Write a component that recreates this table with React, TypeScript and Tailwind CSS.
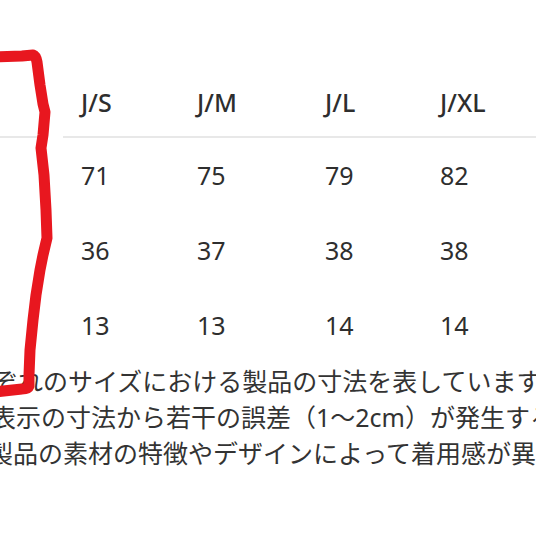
const sizes = ["J/S", "J/M", "J/L", "J/XL"];
const rows = [
  ["71", "75", "79", "82"],
  ["36", "37", "38", "38"],
  ["13", "13", "14", "14"],
];
const colWidths = ["w-[116px]", "w-[128px]", "w-[115px]", "flex-1"];

const Row = ({ cells, className }: { cells: string[]; className: string }) => (
  <div className={`flex items-center pl-[81px] ${className}`}>
    {cells.map((c, i) => (
      <div key={i} className={colWidths[i]}>
        {c}
      </div>
    ))}
  </div>
);

export default function App() {
  return (
    <div className="relative w-[536px] h-[536px] overflow-hidden bg-white font-['Noto_Sans','Noto_Sans_CJK_JP',sans-serif] text-[25px] text-[#2e2e2e]">
      <div className="pt-[70px]">
        <Row cells={sizes} className="h-[66px] font-medium" />
        <div className="flex h-[2px]">
          <div className="w-[44px] bg-[#e8e8e8]" />
          <div className="w-[19px]" />
          <div className="flex-1 bg-[#e8e8e8]" />
        </div>
        {rows.map((r, i) => (
          <Row key={i} cells={r} className="h-[75px]" />
        ))}
        <div className="whitespace-nowrap leading-[36px] text-[#333]">
          <p className="ml-[-57px]">それぞれのサイズにおける製品の寸法を表しています。</p>
          <p className="ml-[-9px]">表示の寸法から若干の誤差（1〜2cm）が発生する場合があります。</p>
          <p className="ml-[-12px]">製品の素材の特徴やデザインによって着用感が異なる場合があります。</p>
        </div>
      </div>

      {/* hand-drawn red marker */}
      <svg className="pointer-events-none absolute inset-0" width="536" height="536" viewBox="0 0 536 536">
        <path
          d="M -6 57 L 22 56 L 33 55 Q 36 56 37 62 L 40 85 L 43 104 L 45 112 L 43 135 L 41 148 L 44 175 L 46 210 L 47 238 L 43 255 L 40 270 L 36 295 L 33 320 L 30 350 L 29 375 L 29 386 Q 28 389 22 389 L -6 392"
          fill="none"
          stroke="#e8171f"
          strokeWidth="11"
          strokeLinecap="round"
          strokeLinejoin="round"
        />
      </svg>
    </div>
  );
}
